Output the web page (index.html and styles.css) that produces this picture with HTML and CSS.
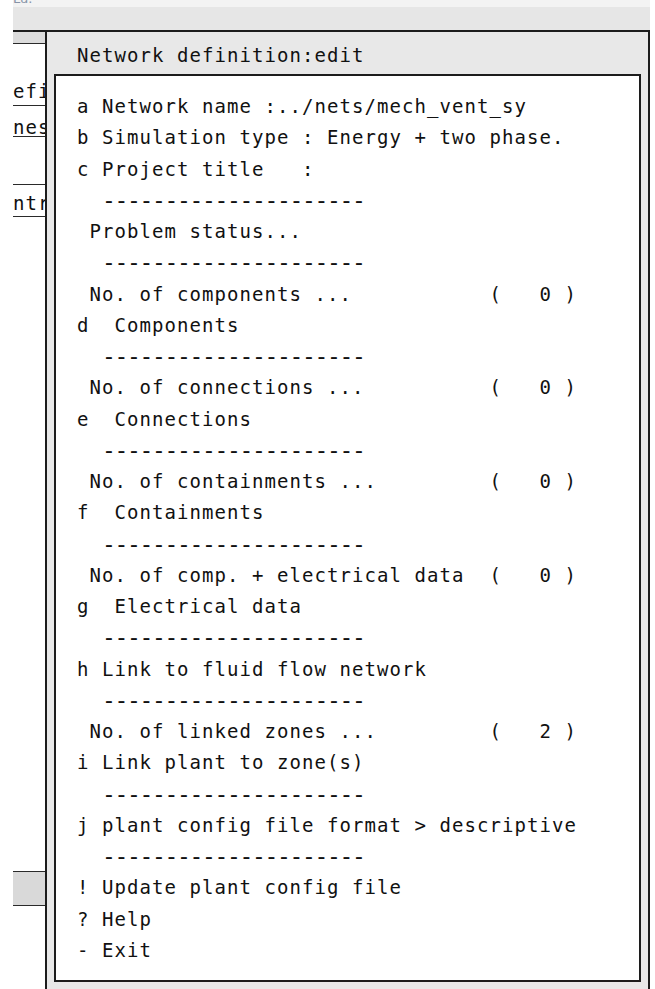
FILE: index.html
```html
<!DOCTYPE html>
<html>
<head>
<meta charset="utf-8">
<title>Network definition:edit</title>
<link rel="stylesheet" href="styles.css">
</head>
<body>
<div class="screen">
  <div class="strip"><span>Lu.</span></div>
  <div class="band"></div>
  <div class="work">
    <div class="side">
      <div class="side-head"></div>
      <div class="side-efi">efi</div>
      <div class="side-nes">nes</div>
      <div class="side-ntr">ntr</div>
      <div class="side-block"></div>
    </div>
    <div class="dialog">
      <div class="title">Network definition:edit</div>
      <div class="panel"><div>a Network name :../nets/mech_vent_sy</div><div>b Simulation type : Energy + two phase.</div><div>c Project title   :</div><div class="rule">  ---------------------</div><div> Problem status...</div><div class="rule">  ---------------------</div><div> No. of components ...           (   0 )</div><div>d  Components</div><div class="rule">  ---------------------</div><div> No. of connections ...          (   0 )</div><div>e  Connections</div><div class="rule">  ---------------------</div><div> No. of containments ...         (   0 )</div><div>f  Containments</div><div class="rule">  ---------------------</div><div> No. of comp. + electrical data  (   0 )</div><div>g  Electrical data</div><div class="rule">  ---------------------</div><div>h Link to fluid flow network</div><div class="rule">  ---------------------</div><div> No. of linked zones ...         (   2 )</div><div>i Link plant to zone(s)</div><div class="rule">  ---------------------</div><div>j plant config file format &gt; descriptive</div><div class="rule">  ---------------------</div><div>! Update plant config file</div><div>? Help</div><div>- Exit</div></div>
    </div>
  </div>
</div>
</body>
</html>
```
FILE: styles.css
```css
html, body {
  margin: 0;
  height: 989px;
  overflow: hidden;
  background: #ffffff;
}
body {
  font-family: "DejaVu Sans Mono", monospace;
  font-size: 19px;
  letter-spacing: 1.06px;
  color: #111;
}
.screen {
  margin-left: 13px;
  width: 637px;
}
.strip {
  height: 7px;
  overflow: hidden;
  background: #f3f3f3;
}
.strip span {
  display: block;
  margin-top: -8px;
  font-family: "DejaVu Sans", sans-serif;
  font-size: 13px;
  line-height: 14px;
  letter-spacing: 0;
  color: #8794a8;
}
.band {
  height: 23px;
  background: #e6e6e6;
}
.work {
  display: flex;
  align-items: flex-start;
  border-top: 2px solid #1c1c1c;
}
.side {
  width: 32px;
  flex: none;
  overflow: hidden;
  background: #fff;
}
.side-head {
  height: 11px;
  background: #dcdcdc;
  border-bottom: 1px solid #2a2a2a;
}
.side-efi,
.side-nes,
.side-ntr {
  white-space: pre;
  line-height: 20px;
  overflow: hidden;
}
.side-efi {
  padding-top: 37px;
  height: 24px;
  border-bottom: 1px solid #2a2a2a;
}
.side-nes {
  padding-top: 11px;
  height: 19px;
  border-bottom: 1px solid #2a2a2a;
}
.side-ntr {
  margin-top: 47px;
  border-top: 1px solid #2a2a2a;
  padding-top: 8px;
  height: 23px;
  border-bottom: 1px solid #2a2a2a;
}
.side-block {
  margin-top: 654px;
  height: 33px;
  background: #d9d9d9;
  border-top: 1px solid #2a2a2a;
  border-bottom: 1px solid #2a2a2a;
}
.dialog {
  flex: 1;
  background: #e8e8e8;
  border-left: 2px solid #1c1c1c;
  border-right: 2px solid #1c1c1c;
  padding-bottom: 7px;
}
.title {
  padding: 4px 0 0 30px;
  height: 38px;
  line-height: 38px;
  white-space: pre;
}
.panel {
  margin: 0 7px;
  border: 2px solid #1c1c1c;
  background: #fff;
  padding: 15px 0 14px 21px;
  line-height: 31.25px;
  white-space: pre;
}
.rule {
  font-size: 23px;
  letter-spacing: -1.35px;
  height: 31.25px;
}
```
